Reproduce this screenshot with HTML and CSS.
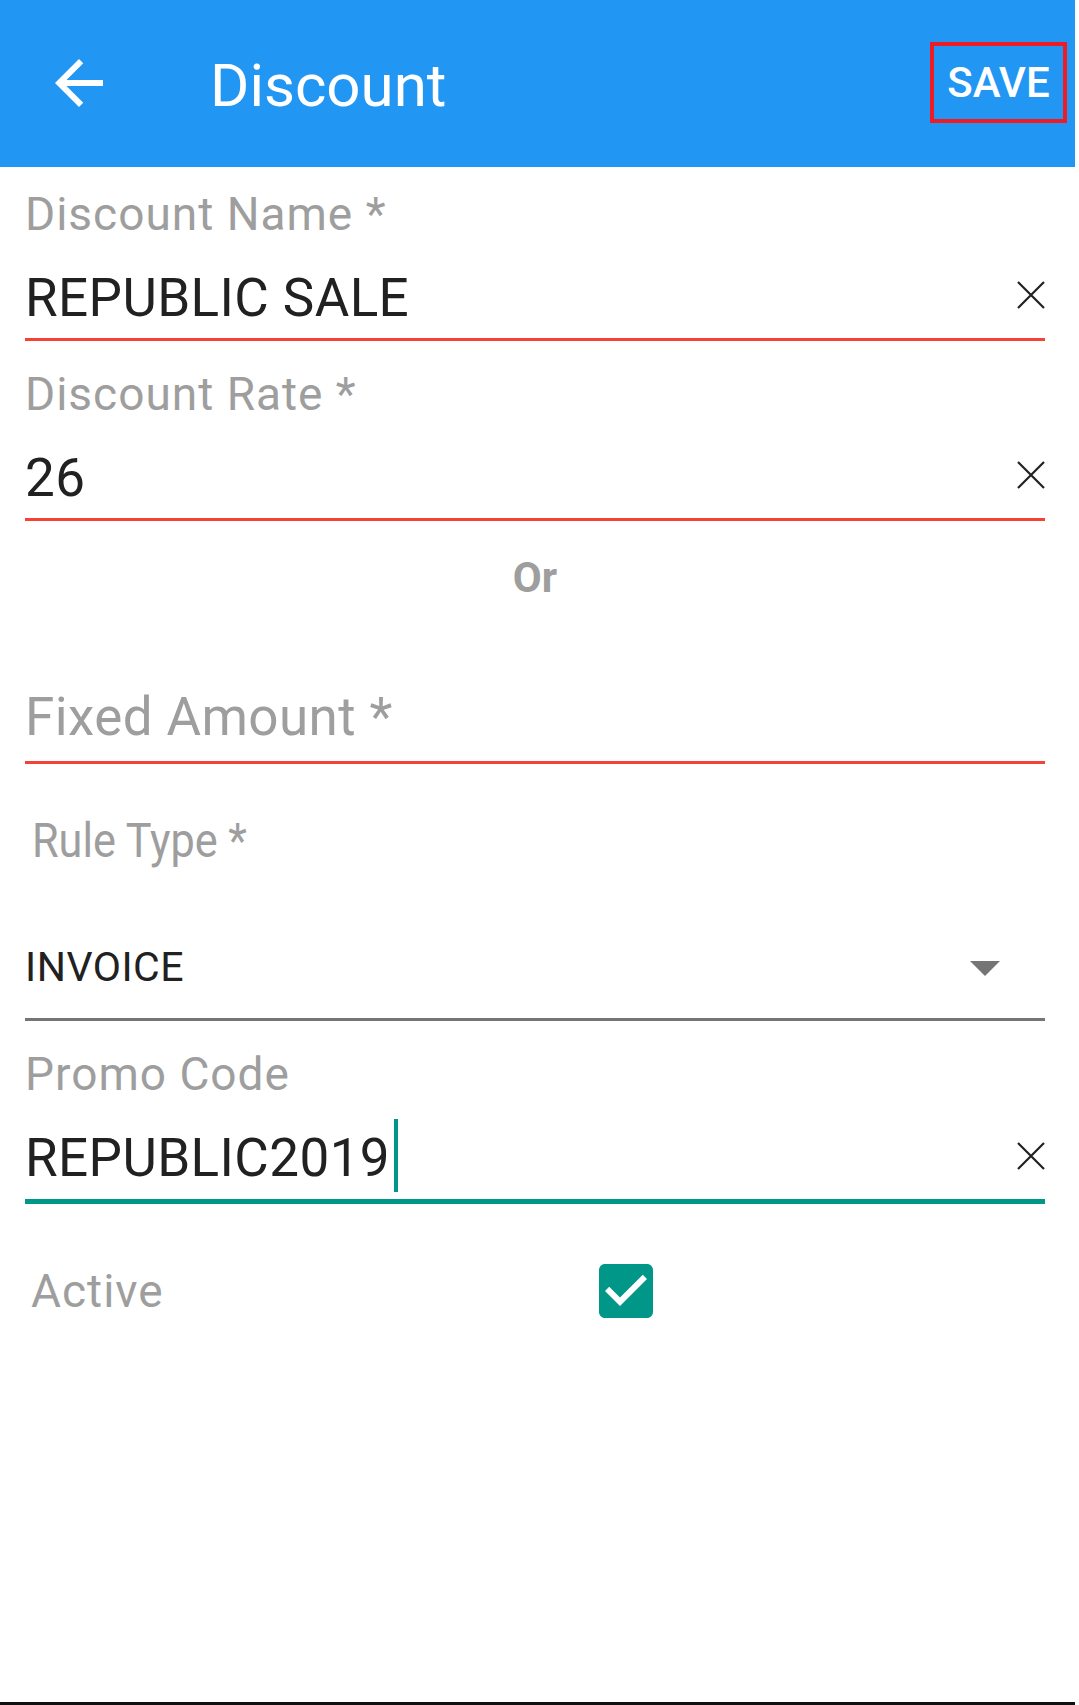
FILE: index.html
```html
<!DOCTYPE html>
<html lang="en">
<head>
<meta charset="utf-8">
<title>Discount</title>
<link rel="stylesheet" href="styles.css">
</head>
<body>
<div class="screen">
  <header class="appbar">
    <svg class="back" viewBox="0 0 24 24" width="72" height="72" aria-hidden="true">
      <path fill="#fff" d="M20 11H7.83l5.59-5.59L12 4l-8 8 8 8 1.41-1.41L7.83 13H20v-2z"/>
    </svg>
    <h1 class="title">Discount</h1>
    <button class="save">SAVE</button>
  </header>

  <main class="form">
    <div class="field field-first">
      <div class="label">Discount Name *</div>
      <div class="input-row error">
        <span class="value">REPUBLIC SALE</span>
        <svg class="clear" viewBox="0 0 28 28" width="28" height="28" aria-hidden="true">
          <path d="M1 1L27 27M27 1L1 27" stroke="#212121" stroke-width="2.2" fill="none"/>
        </svg>
      </div>
    </div>

    <div class="field">
      <div class="label">Discount Rate *</div>
      <div class="input-row error">
        <span class="value">26</span>
        <svg class="clear" viewBox="0 0 28 28" width="28" height="28" aria-hidden="true">
          <path d="M1 1L27 27M27 1L1 27" stroke="#212121" stroke-width="2.2" fill="none"/>
        </svg>
      </div>
    </div>

    <div class="or">Or</div>

    <div class="field field-fixed">
      <div class="input-row error fixed-row">
        <span class="value placeholder">Fixed Amount *</span>
      </div>
    </div>

    <div class="rule-label"><span>Rule Type *</span></div>

    <div class="select-row">
      <span class="select-value">INVOICE</span>
      <svg class="caret" viewBox="0 0 30 15" width="30" height="15" aria-hidden="true">
        <path d="M0 0H30L15 15Z" fill="#757575"/>
      </svg>
    </div>

    <div class="field field-promo">
      <div class="label">Promo Code</div>
      <div class="input-row focused">
        <span class="value with-cursor">REPUBLIC2019</span>
        <svg class="clear" viewBox="0 0 28 28" width="28" height="28" aria-hidden="true">
          <path d="M1 1L27 27M27 1L1 27" stroke="#212121" stroke-width="2.2" fill="none"/>
        </svg>
      </div>
    </div>

    <div class="active-row">
      <span class="active-label">Active</span>
      <svg class="checkbox" viewBox="3 3 18 18" width="54" height="54" aria-hidden="true">
        <path fill="#009688" d="M19 3H5c-1.11 0-2 .9-2 2v14c0 1.1.89 2 2 2h14c1.11 0 2-.9 2-2V5c0-1.1-.89-2-2-2z"/>
        <path fill="#fff" d="M10 17l-5-5 1.41-1.41L10 14.17l7.59-7.59L19 8l-9 9z"/>
      </svg>
    </div>
  </main>
</div>
</body>
</html>
```

FILE: styles.css
```css
* {
  box-sizing: border-box;
}

html, body {
  margin: 0;
  padding: 0;
  background: #ffffff;
}

body {
  width: 1079px;
  height: 1705px;
  overflow: hidden;
  font-family: Roboto, "Noto Sans", Arial, sans-serif;
}

.screen {
  width: 1075px;
  height: 1705px;
  display: flex;
  flex-direction: column;
  background: #ffffff;
  border-bottom: 3px solid #111111;
}

/* ---------- App bar ---------- */
.appbar {
  height: 167px;
  flex: 0 0 167px;
  background: #2196F3;
  display: flex;
  align-items: flex-start;
  padding-right: 8px;
}

.back {
  display: block;
  margin-left: 43px;
  margin-top: 47px;
  flex: 0 0 auto;
}

.title {
  margin: 56px 0 0 95px;
  font-size: 60px;
  line-height: 60px;
  font-weight: 400;
  color: #ffffff;
}

.save {
  margin-left: auto;
  margin-top: 42px;
  width: 137px;
  height: 81px;
  padding: 16px 0 15px 0;
  border: 4px solid #ED1C24;
  background: transparent;
  color: #ffffff;
  font-family: Roboto, "Noto Sans", Arial, sans-serif;
  font-size: 42px;
  line-height: 42px;
  font-weight: 500;
  text-align: center;
  cursor: pointer;
}

/* ---------- Form ---------- */
.form {
  flex: 1 1 auto;
  padding: 0 30px 0 25px;
  display: flex;
  flex-direction: column;
}

.field {
  margin-top: 30px;
}

.field-first {
  margin-top: 24px;
}

.label {
  font-size: 46px;
  line-height: 46px;
  letter-spacing: 1px;
  color: #9e9e9e;
  white-space: nowrap;
}

.input-row {
  display: flex;
  align-items: flex-start;
  justify-content: space-between;
  margin-top: 35px;
  padding-bottom: 13px;
}

.input-row.error {
  border-bottom: 3px solid #F44336;
}

.input-row.focused {
  padding-bottom: 14px;
  border-bottom: 5px solid #009688;
}

.value {
  font-size: 53px;
  line-height: 53px;
  letter-spacing: 0.4px;
  color: #212121;
  white-space: nowrap;
}

.value.placeholder {
  color: #9e9e9e;
}

.with-cursor {
  position: relative;
}

.with-cursor::after {
  content: "";
  position: absolute;
  left: calc(100% + 4px);
  top: -13px;
  width: 4px;
  height: 73px;
  background: #009688;
}

.clear {
  display: block;
  margin-top: 9px;
  flex: 0 0 auto;
}

.field-promo .clear {
  margin-top: 10px;
}

.or {
  margin-top: 36px;
  font-size: 42px;
  line-height: 42px;
  font-weight: 700;
  color: #9e9e9e;
  text-align: center;
}

.field-fixed {
  margin-top: 92px;
}

.fixed-row {
  margin-top: 0;
  padding-bottom: 17px;
}

.rule-label {
  margin-top: 53px;
  padding-left: 7px;
  height: 48px;
}

.rule-label span {
  display: inline-block;
  font-size: 48px;
  line-height: 48px;
  color: #9e9e9e;
  white-space: nowrap;
  transform: scaleX(0.9);
  transform-origin: left center;
}

.select-row {
  margin-top: 82px;
  display: flex;
  align-items: flex-start;
  justify-content: space-between;
  padding-bottom: 30px;
  border-bottom: 3px solid #757575;
}

.select-value {
  font-size: 41px;
  line-height: 41px;
  letter-spacing: 0.5px;
  color: #212121;
}

.caret {
  display: block;
  margin-top: 14px;
  margin-right: 45px;
}

.active-row {
  margin-top: 60px;
  display: grid;
  grid-template-columns: 574px 54px;
  align-items: center;
}

.active-label {
  padding-left: 6px;
  font-size: 46px;
  line-height: 46px;
  letter-spacing: 1px;
  color: #9e9e9e;
}

.checkbox {
  display: block;
}
```
